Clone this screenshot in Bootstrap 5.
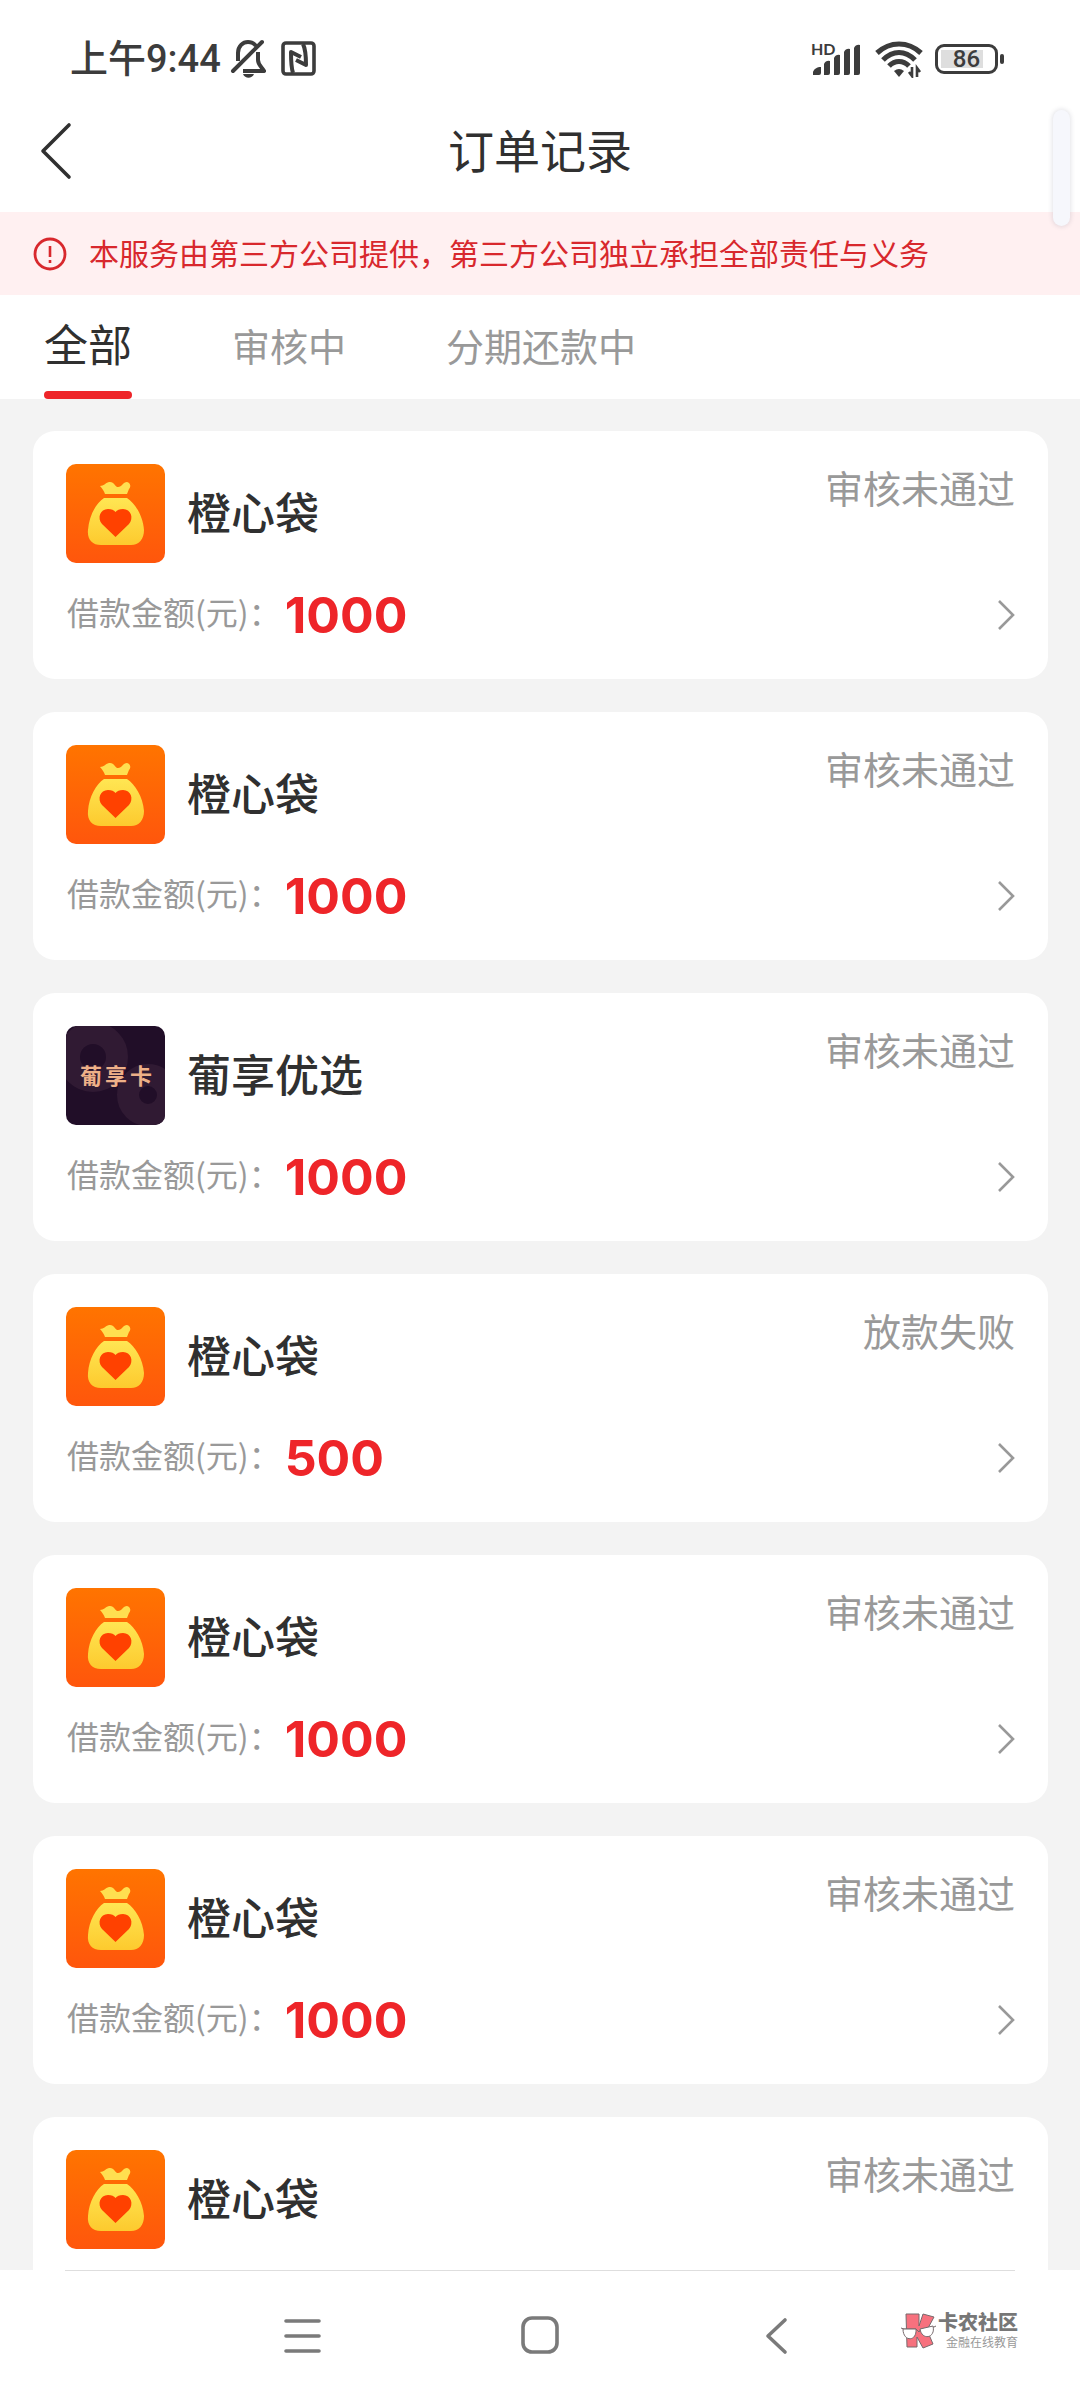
<!DOCTYPE html>
<html lang="zh-CN">
<head>
<meta charset="utf-8">
<meta name="viewport" content="width=device-width, initial-scale=1">
<title>订单记录</title>
<link href="https://cdn.jsdelivr.net/npm/bootstrap@5.3.0/dist/css/bootstrap.min.css" rel="stylesheet">
<style>
  body { font-family: "Noto Sans CJK SC", sans-serif; color: #303030; background: #fff; line-height: 1.2; }
  svg { display: block; flex: none; }
  .status-bar { height: 98px; padding: 20px 76px 0 70px; color: #3c3c3c; }
  .clock { font: 500 38px/44px Roboto, "Noto Sans CJK SC", sans-serif; }
  .hd-label { font: 700 16px/14px Lato, sans-serif; top: 0; left: 0; }
  .battery { width: 63px; height: 30px; border: 3px solid #3c3c3c; border-radius: 9px; padding: 3px; }
  .battery-level { background: linear-gradient(90deg, #dedede 82%, #fff 82%); font: 500 24px/18px Roboto, sans-serif; }
  .battery-nub { width: 4px; height: 10px; border-radius: 2px; background: #3c3c3c; margin-left: 2px; }
  .title-bar { height: 114px; }
  .title-bar h1 { font-size: 46px; line-height: 46px; padding-bottom: 14px; }
  .back-btn { left: 38px; top: 22px; color: #303030; }
  .notice { height: 83px; padding: 0 33px; gap: 22px; background: #fff0f1; color: #d8282d; font-size: 30px; line-height: 30px; }
  .notice span { padding-bottom: 4px; }
  .order-tabs { height: 104px; padding: 0 44px; gap: 100px; }
  .order-tabs button { font-size: 38px; line-height: 38px; color: #999; padding: 0 0 4px; }
  .order-tabs button.active { font-size: 44px; line-height: 44px; color: #303030; padding-bottom: 8px; }
  .order-tabs button.active::after { content: ""; position: absolute; left: 0; right: 0; bottom: 0; height: 8px; border-radius: 4px; background: #ee2529; }
  .order-list { background: #f3f3f3; padding: 32px 32px 0 33px; gap: 33px; min-height: 0; }
  .order { flex: none; height: 248px; border-radius: 22px; padding: 33px; background: #fff; color: #303030; }
  .app-logo { border-radius: 10px; }
  .app-name { font-size: 44px; line-height: 44px; font-weight: 500; padding: 0 0 6px 22px; }
  .state { font-size: 38px; line-height: 46px; color: #999; }
  .amount-label { font-size: 32px; line-height: 50px; color: #999; padding: 0 4px 8px 1px; }
  .amount { font: 700 50px/50px Inter, sans-serif; color: #ee2529; }
  .order-foot { margin-top: 23px; }
  .system-nav { height: 130px; }
  .system-nav hr { margin: 0 65px; opacity: 1; border-color: #dedede; }
  .keys { height: 129px; padding: 0 62px 0 280px; }
  .key-group { gap: 191px; }
  .keys button { color: #7a7a7a; }
  .brand-mark { padding-bottom: 10px; }
  .brand-name { font-size: 20px; line-height: 22px; font-weight: 900; color: #777; }
  .brand-sub { font-size: 12px; line-height: 18px; color: #999; }
  .edge-handle { top: 110px; right: 10px; width: 17px; height: 116px; border-radius: 9px; background: #f6f7fc; box-shadow: 0 0 4px 1px rgba(90, 90, 110, .16); }
</style>
</head>
<body class="vh-100 d-flex flex-column overflow-hidden position-relative">

<svg width="0" height="0" class="position-absolute" aria-hidden="true">
  <defs>
    <linearGradient id="orange" x1="0" y1="0" x2="0" y2="1"><stop offset="0" stop-color="#ff7400"/><stop offset="1" stop-color="#ff560c"/></linearGradient>
    <linearGradient id="gold" x1="0" y1="0" x2="0" y2="1"><stop offset="0" stop-color="#ffe653"/><stop offset="1" stop-color="#fdca2e"/></linearGradient>
  </defs>
  <symbol id="bag" viewBox="0 0 99 99">
    <rect width="99" height="99" fill="url(#orange)"/>
    <path d="M34 22c4 0 5-3 9-4c5-1 6 5 9 5c4 0 5-5 9-5c4 1 4 5 2 7l-2 5H39c-1-3-3-6-5-8z" fill="#ffdf50"/>
    <path d="M38 34h23c8 5 16 18 17 32c0 9-5 15-13 15H35c-9 0-14-6-13-15c1-14 8-27 16-32z" fill="url(#gold)"/>
    <path d="M49.5 73L36 60C31 54 34 45 42 45c3.500 0 6 1 7.500 3c1.500-2 4-3 7.500-3c8 0 11 9 6 15z" fill="#ff4100"/>
  </symbol>
  <symbol id="go" viewBox="0 0 18 30"><path d="M2 1l14 14L2 29" fill="none" stroke="#999" stroke-width="2.600"/></symbol>
</svg>

<div class="status-bar d-flex align-items-center justify-content-between flex-shrink-0">
  <div class="d-flex align-items-center">
    <span class="clock">上午9:44</span>
    <svg class="ms-2" width="42" height="40" viewBox="0 0 42 40" fill="none" stroke="currentColor" stroke-width="4">
      <path d="M9 22V14C9 7 14 3 19 3c3 0 6 1 8 4M29 13v8c0 5 4 7 6 11H14" stroke-linejoin="round"/>
      <path d="M4 32L33 3" stroke-linecap="round"/>
      <path d="M14 35h11c-2 5-9 5-11 0z" fill="currentColor" stroke="none"/>
    </svg>
    <svg class="ms-2" width="38" height="38" viewBox="0 0 38 38" fill="none" stroke="currentColor" stroke-linejoin="round">
      <rect x="4" y="3" width="31" height="31" rx="3" stroke-width="3.600"/>
      <path d="M14 33c-2-6-2-14-2-21l10 5M24 4c3 6 3 14 3 21l-10-5" stroke-width="4"/>
    </svg>
  </div>
  <div class="d-flex align-items-center">
    <div class="position-relative">
      <span class="hd-label position-absolute">HD</span>
      <svg width="52" height="34" viewBox="0 0 52 34" fill="currentColor">
        <path d="M2 33v-3c1-3 4-5 8-5v6q0 2-2 2zM13 33V22q2-4 6-3v12q0 2-2 2zM23 33V16q2-4 6-3v18q0 2-2 2zM33 33V10q2-4 6-3v24q0 2-2 2zM43 33V6q2-4 6-3v28q0 2-2 2z"/>
      </svg>
    </div>
    <svg class="ms-2 me-2 px-1" width="56" height="38" viewBox="0 0 48 38" fill="none" stroke="currentColor" stroke-width="5.200">
      <path d="M2 13C15 1 33 1 46 13M8 20C18 10 30 10 40 20M14 26C20 20 28 20 34 26"/>
      <path d="M19 31q5-4 10 0l-5 6z" fill="currentColor" stroke="none"/>
      <path d="M37 27v9l-3-4M42 37v-9l3 4" stroke-width="2.600"/>
    </svg>
    <div class="battery"><div class="battery-level text-center">86</div></div>
    <div class="battery-nub"></div>
  </div>
</div>

<header class="title-bar position-relative d-flex align-items-center justify-content-center flex-shrink-0">
  <button type="button" class="back-btn btn p-0 border-0 position-absolute" aria-label="返回">
    <svg width="36" height="62" viewBox="0 0 36 62" fill="none" stroke="currentColor" stroke-width="3.600" stroke-linecap="round" stroke-linejoin="round"><path d="M31 5L5 31l26 26"/></svg>
  </button>
  <h1 class="m-0 fw-normal">订单记录</h1>
</header>

<div class="notice d-flex align-items-center flex-shrink-0" role="note">
  <svg width="34" height="34" viewBox="0 0 34 34" fill="none" stroke="currentColor"><circle cx="17" cy="17" r="15" stroke-width="2.800"/><path d="M17 9v11M17 23v3" stroke-width="2.600"/></svg>
  <span>本服务由第三方公司提供，第三方公司独立承担全部责任与义务</span>
</div>

<nav class="order-tabs d-flex flex-shrink-0" role="tablist">
  <button type="button" role="tab" aria-selected="true" class="active btn rounded-0 border-0 position-relative">全部</button>
  <button type="button" role="tab" aria-selected="false" class="btn rounded-0 border-0">审核中</button>
  <button type="button" role="tab" aria-selected="false" class="btn rounded-0 border-0">分期还款中</button>
</nav>

<main class="order-list d-flex flex-column flex-fill overflow-hidden">
  <a href="#" class="order text-decoration-none">
    <div class="d-flex align-items-start justify-content-between">
      <div class="d-flex align-items-center"><svg class="app-logo" width="99" height="99"><use href="#bag"/></svg><span class="app-name">橙心袋</span></div>
      <span class="state">审核未通过</span>
    </div>
    <div class="order-foot d-flex align-items-center justify-content-between">
      <div class="d-flex align-items-center"><span class="amount-label">借款金额(元)：</span><span class="amount">1000</span></div>
      <svg width="18" height="30"><use href="#go"/></svg>
    </div>
  </a>
  <a href="#" class="order text-decoration-none">
    <div class="d-flex align-items-start justify-content-between">
      <div class="d-flex align-items-center"><svg class="app-logo" width="99" height="99"><use href="#bag"/></svg><span class="app-name">橙心袋</span></div>
      <span class="state">审核未通过</span>
    </div>
    <div class="order-foot d-flex align-items-center justify-content-between">
      <div class="d-flex align-items-center"><span class="amount-label">借款金额(元)：</span><span class="amount">1000</span></div>
      <svg width="18" height="30"><use href="#go"/></svg>
    </div>
  </a>
  <a href="#" class="order text-decoration-none">
    <div class="d-flex align-items-start justify-content-between">
      <div class="d-flex align-items-center">
        <svg class="app-logo" width="99" height="99" viewBox="0 0 99 99">
          <rect width="99" height="99" fill="#210e28"/>
          <g fill="none" stroke="#301a33" stroke-width="22"><circle cx="27" cy="31" r="24"/><circle cx="82" cy="69" r="20"/></g>
          <text x="14 39 64" y="58" font-size="22" font-weight="700" fill="#eeb088" font-family="Noto Sans CJK SC, sans-serif">葡享卡</text>
        </svg>
        <span class="app-name">葡享优选</span>
      </div>
      <span class="state">审核未通过</span>
    </div>
    <div class="order-foot d-flex align-items-center justify-content-between">
      <div class="d-flex align-items-center"><span class="amount-label">借款金额(元)：</span><span class="amount">1000</span></div>
      <svg width="18" height="30"><use href="#go"/></svg>
    </div>
  </a>
  <a href="#" class="order text-decoration-none">
    <div class="d-flex align-items-start justify-content-between">
      <div class="d-flex align-items-center"><svg class="app-logo" width="99" height="99"><use href="#bag"/></svg><span class="app-name">橙心袋</span></div>
      <span class="state">放款失败</span>
    </div>
    <div class="order-foot d-flex align-items-center justify-content-between">
      <div class="d-flex align-items-center"><span class="amount-label">借款金额(元)：</span><span class="amount">500</span></div>
      <svg width="18" height="30"><use href="#go"/></svg>
    </div>
  </a>
  <a href="#" class="order text-decoration-none">
    <div class="d-flex align-items-start justify-content-between">
      <div class="d-flex align-items-center"><svg class="app-logo" width="99" height="99"><use href="#bag"/></svg><span class="app-name">橙心袋</span></div>
      <span class="state">审核未通过</span>
    </div>
    <div class="order-foot d-flex align-items-center justify-content-between">
      <div class="d-flex align-items-center"><span class="amount-label">借款金额(元)：</span><span class="amount">1000</span></div>
      <svg width="18" height="30"><use href="#go"/></svg>
    </div>
  </a>
  <a href="#" class="order text-decoration-none">
    <div class="d-flex align-items-start justify-content-between">
      <div class="d-flex align-items-center"><svg class="app-logo" width="99" height="99"><use href="#bag"/></svg><span class="app-name">橙心袋</span></div>
      <span class="state">审核未通过</span>
    </div>
    <div class="order-foot d-flex align-items-center justify-content-between">
      <div class="d-flex align-items-center"><span class="amount-label">借款金额(元)：</span><span class="amount">1000</span></div>
      <svg width="18" height="30"><use href="#go"/></svg>
    </div>
  </a>
  <a href="#" class="order text-decoration-none">
    <div class="d-flex align-items-start justify-content-between">
      <div class="d-flex align-items-center"><svg class="app-logo" width="99" height="99"><use href="#bag"/></svg><span class="app-name">橙心袋</span></div>
      <span class="state">审核未通过</span>
    </div>
  </a>
</main>

<footer class="system-nav flex-shrink-0 bg-white">
  <hr>
  <div class="keys d-flex align-items-center justify-content-between">
    <div class="key-group d-flex align-items-center">
      <button type="button" class="btn p-0 border-0" aria-label="最近任务">
        <svg width="46" height="46" viewBox="0 0 46 46" fill="none" stroke="currentColor" stroke-width="3.600" stroke-linecap="round"><path d="M6 8h33M6 23h33M6 38h33"/></svg>
      </button>
      <button type="button" class="btn p-0 border-0" aria-label="主屏幕">
        <svg width="46" height="46" viewBox="0 0 46 46" fill="none" stroke="currentColor" stroke-width="3.600"><rect x="6" y="5" width="34" height="34" rx="9"/></svg>
      </button>
      <button type="button" class="btn p-0 border-0" aria-label="返回上一页">
        <svg width="46" height="46" viewBox="0 0 46 46" fill="none" stroke="currentColor" stroke-width="3.600" stroke-linecap="round" stroke-linejoin="round"><path d="M31 7L14 23l17 16"/></svg>
      </button>
    </div>
    <div class="brand-mark d-flex align-items-center">
      <svg width="38" height="40" viewBox="0 0 38 40" stroke="#776a6d" stroke-width="1">
        <path d="M6 3h13v12l4-12 11 3-7 13 6 14-10 4-6-11v10H7z" fill="#f7717e"/>
        <path d="M1 17l3 1h12l3 3 2-3 13-2 2-1" fill="none"/>
        <path d="M3 18h13c1 13-13 13-13 0zM20 18l13-3c3 12-11 15-13 3z" fill="#fff"/>
      </svg>
      <div>
        <div class="brand-name">卡农社区</div>
        <div class="brand-sub text-end">金融在线教育</div>
      </div>
    </div>
  </div>
</footer>

<div class="edge-handle position-absolute"></div>
<script src="https://cdn.jsdelivr.net/npm/bootstrap@5.3.0/dist/js/bootstrap.bundle.min.js"></script>
</body>
</html>
